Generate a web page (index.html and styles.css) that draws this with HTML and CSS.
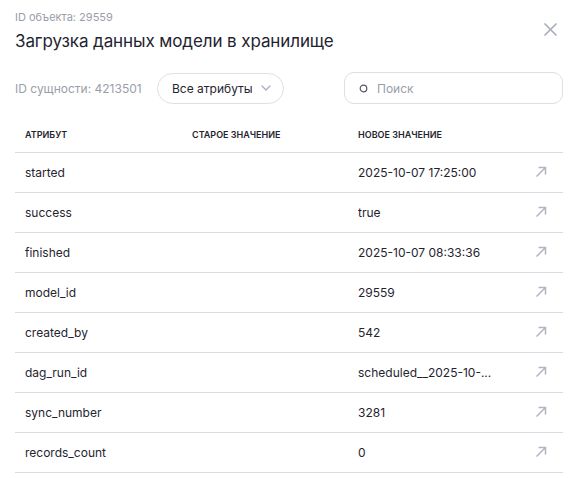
FILE: index.html
```html
<!DOCTYPE html>
<html lang="ru">
<head>
<meta charset="utf-8">
<link rel="stylesheet" href="styles.css">
</head>
<body>
<div class="modal">
  <div class="head">
    <div class="head-text">
      <div class="obj-id">ID объекта: 29559</div>
      <h1 class="title">Загрузка данных модели в хранилище</h1>
    </div>
    <button class="close" aria-label="Закрыть">
      <svg width="13" height="13" viewBox="0 0 13 13"><path d="M1 1L12 12M12 1L1 12" stroke="#a9adbd" stroke-width="1.7" fill="none" stroke-linecap="round"/></svg>
    </button>
  </div>
  <div class="filters">
    <span class="entity-id">ID сущности: 4213501</span>
    <div class="select">
      <span>Все атрибуты</span>
      <svg width="10" height="6" viewBox="0 0 10 6"><path d="M1 1l4 4 4-4" stroke="#a9adbd" stroke-width="1.3" fill="none" stroke-linecap="round" stroke-linejoin="round"/></svg>
    </div>
    <div class="search">
      <svg width="9" height="9" viewBox="0 0 9 9"><circle cx="4.5" cy="4.5" r="3.3" stroke="#555a66" stroke-width="1.2" fill="none"/></svg>
      <span>Поиск</span>
    </div>
  </div>
  <table class="tbl">
    <thead>
      <tr><th class="c1">Атрибут</th><th class="c2">Старое значение</th><th class="c3">Новое значение</th><th class="c4"></th></tr>
    </thead>
    <tbody>
      <tr><td>started</td><td></td><td>2025-10-07 17:25:00</td><td class="c4"><svg class="ar" width="12" height="12" viewBox="0 0 12 12"><path d="M1.5 10.5L10.5 1.5M3.5 1.5h7v7" stroke="#b1b4c2" stroke-width="1.5" fill="none"/></svg></td></tr>
      <tr><td>success</td><td></td><td>true</td><td class="c4"><svg class="ar" width="12" height="12" viewBox="0 0 12 12"><path d="M1.5 10.5L10.5 1.5M3.5 1.5h7v7" stroke="#b1b4c2" stroke-width="1.5" fill="none"/></svg></td></tr>
      <tr><td>finished</td><td></td><td>2025-10-07 08:33:36</td><td class="c4"><svg class="ar" width="12" height="12" viewBox="0 0 12 12"><path d="M1.5 10.5L10.5 1.5M3.5 1.5h7v7" stroke="#b1b4c2" stroke-width="1.5" fill="none"/></svg></td></tr>
      <tr><td>model_id</td><td></td><td>29559</td><td class="c4"><svg class="ar" width="12" height="12" viewBox="0 0 12 12"><path d="M1.5 10.5L10.5 1.5M3.5 1.5h7v7" stroke="#b1b4c2" stroke-width="1.5" fill="none"/></svg></td></tr>
      <tr><td>created_by</td><td></td><td>542</td><td class="c4"><svg class="ar" width="12" height="12" viewBox="0 0 12 12"><path d="M1.5 10.5L10.5 1.5M3.5 1.5h7v7" stroke="#b1b4c2" stroke-width="1.5" fill="none"/></svg></td></tr>
      <tr><td>dag_run_id</td><td></td><td>scheduled__2025-10-...</td><td class="c4"><svg class="ar" width="12" height="12" viewBox="0 0 12 12"><path d="M1.5 10.5L10.5 1.5M3.5 1.5h7v7" stroke="#b1b4c2" stroke-width="1.5" fill="none"/></svg></td></tr>
      <tr><td>sync_number</td><td></td><td>3281</td><td class="c4"><svg class="ar" width="12" height="12" viewBox="0 0 12 12"><path d="M1.5 10.5L10.5 1.5M3.5 1.5h7v7" stroke="#b1b4c2" stroke-width="1.5" fill="none"/></svg></td></tr>
      <tr><td>records_count</td><td></td><td>0</td><td class="c4"><svg class="ar" width="12" height="12" viewBox="0 0 12 12"><path d="M1.5 10.5L10.5 1.5M3.5 1.5h7v7" stroke="#b1b4c2" stroke-width="1.5" fill="none"/></svg></td></tr>
    </tbody>
  </table>
</div>
</body>
</html>
```
FILE: styles.css
```css
* { box-sizing: border-box; }
html, body { margin: 0; padding: 0; background: #fff; }
body {
  font-family: Inter, "Noto Sans", Roboto, sans-serif;
  color: #1f2430;
  width: 577px;
  height: 478px;
  overflow: hidden;
}
.modal { padding: 10px 14px 0 15px; }
.head { display: flex; justify-content: space-between; align-items: flex-start; }
.obj-id { font-size: 11px; color: #9a9ea8; line-height: 14px; }
.title { margin: 5px 0 0; font-size: 17px; font-weight: 400; line-height: 24px; letter-spacing: -0.1px; }
.close { border: 0; background: none; padding: 0; margin: 12px 6px 0 0; width: 14px; height: 14px; display: flex; align-items: center; justify-content: center; }
.filters { display: flex; align-items: center; margin-top: 19px; height: 32px; }
.filters > * { flex-shrink: 0; }
.entity-id { font-size: 12px; color: #9a9ea8; width: 142px; }
.select {
  width: 127px; height: 31px; border: 1px solid #dde0e6; border-radius: 16px;
  display: flex; align-items: center; justify-content: space-between;
  padding: 0 12px 0 14px; font-size: 12px; color: #1f2430;
}
.search {
  margin-left: 60px; width: 219px; height: 32px; border: 1px solid #dde0e6; border-radius: 10px;
  display: flex; align-items: center; gap: 9px; padding-left: 14px;
  font-size: 12px; color: #9a9ea8;
}
.tbl { width: 548px; border-collapse: collapse; margin-top: 14px; table-layout: fixed; }
.tbl th {
  font-size: 9px; font-weight: 600; text-transform: uppercase; text-align: left;
  height: 34px; padding: 0 10px; border-bottom: 1px solid #d8dce3; color: #1f2430;
  vertical-align: middle; letter-spacing: 0;
}
.tbl th.c1 { width: 167px; }
.tbl th.c2 { width: 166px; }
.tbl th.c4 { width: 40px; }
.tbl td {
  height: 40px; padding: 0 10px; font-size: 12px; border-bottom: 1px solid #d8dce3;
  vertical-align: middle; white-space: nowrap; overflow: hidden;
}
.tbl td.c4 { padding: 0 0 0 12px; }
.ar { display: block; }
```
